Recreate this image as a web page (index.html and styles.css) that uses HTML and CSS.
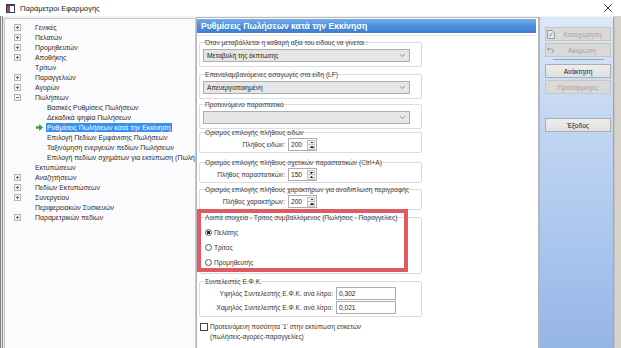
FILE: index.html
```html
<!DOCTYPE html>
<html lang="el">
<head>
  <meta charset="utf-8">
  <title>Παράμετροι Εφαρμογής</title>
  <link rel="stylesheet" href="styles.css">
</head>
<body>
  <div class="window">
    <div class="titlebar">
      <svg class="app-icon" width="9" height="9" viewBox="0 0 9 9">
        <rect x="0.5" y="0.5" width="8" height="8" fill="#fff" stroke="#2b3f73"/>
        <rect x="0" y="0" width="9" height="2" fill="#2b3f73"/>
        <rect x="1" y="2" width="3" height="6" fill="#d2343a"/>
      </svg>
      <span class="title">Παράμετροι Εφαρμογής</span>
      <svg class="close" width="8" height="8" viewBox="0 0 8 8">
        <path d="M0.5 0.5 L7.5 7.5 M7.5 0.5 L0.5 7.5" stroke="#333" stroke-width="1"/>
      </svg>
    </div>

    <div class="main">
      <div class="tree">
        <ul>
          <li class="row"><span class="twist"><span class="box plus"></span></span>Γενικές</li>
          <li class="row"><span class="twist"><span class="box plus"></span></span>Πελατών</li>
          <li class="row"><span class="twist"><span class="box plus"></span></span>Προμηθευτών</li>
          <li class="row"><span class="twist"><span class="box plus"></span></span>Αποθήκης</li>
          <li class="row"><span class="twist"></span>Τρίτων</li>
          <li class="row"><span class="twist"><span class="box plus"></span></span>Παραγγελιών</li>
          <li class="row"><span class="twist"><span class="box plus"></span></span>Αγορών</li>
          <li class="row"><span class="twist"><span class="box"></span></span>Πωλήσεων</li>
          <li class="row child"><span class="twist"></span>Βασικές Ρυθμίσεις Πωλήσεων</li>
          <li class="row child"><span class="twist"></span>Δεκαδικά ψηφία Πωλήσεων</li>
          <li class="row child">
            <span class="twist">
              <svg class="arrow" width="7" height="7" viewBox="0 0 7 7">
                <path d="M0 2.2 H3.2 V0 L7 3.5 L3.2 7 V4.8 H0 Z" fill="#3e9e38"/>
              </svg>
            </span>
            <span class="selected">Ρυθμίσεις Πωλήσεων κατά την Εκκίνηση</span>
          </li>
          <li class="row child"><span class="twist"></span>Επιλογή Πεδίων Εμφάνισης Πωλήσεων</li>
          <li class="row child"><span class="twist"></span>Ταξινόμηση ενεργειών πεδίων Πωλήσεων</li>
          <li class="row child"><span class="twist"></span>Επιλογή πεδίων σχημάτων για εκτύπωση (Πωλήσεις)</li>
          <li class="row"><span class="twist"></span>Εκτυπώσεων</li>
          <li class="row"><span class="twist"><span class="box plus"></span></span>Αναζητήσεων</li>
          <li class="row"><span class="twist"><span class="box plus"></span></span>Πεδίων Εκτυπώσεων</li>
          <li class="row"><span class="twist"><span class="box plus"></span></span>Συνεργείου</li>
          <li class="row"><span class="twist"></span>Περιφερειακών Συσκευών</li>
          <li class="row"><span class="twist"><span class="box plus"></span></span>Παραμετρικών πεδίων</li>
        </ul>
      </div>

      <div class="panel">
        <div class="panel-head">Ρυθμίσεις Πωλήσεων κατά την Εκκίνηση</div>
        <div class="head-rule"></div>

        <div class="groups">
          <div class="group g1">
            <span class="legend">Όταν μεταβάλλεται η καθαρή αξία του είδους να γίνεται :</span>
            <div class="combo"><span>Μεταβολή της έκπτωσης</span><svg width="5" height="3" viewBox="0 0 5 3"><path d="M0.3 0.3 L2.5 2.5 L4.7 0.3" fill="none" stroke="#777" stroke-width="0.8"/></svg></div>
          </div>

          <div class="group g2">
            <span class="legend">Επαναλαμβανόμενες εισαγωγές στα είδη (LF)</span>
            <div class="combo"><span>Απενεργοποιημένη</span><svg width="5" height="3" viewBox="0 0 5 3"><path d="M0.3 0.3 L2.5 2.5 L4.7 0.3" fill="none" stroke="#777" stroke-width="0.8"/></svg></div>
          </div>

          <div class="group g3">
            <span class="legend">Προτεινόμενο παραστατικό</span>
            <div class="combo"><span></span><svg width="5" height="3" viewBox="0 0 5 3"><path d="M0.3 0.3 L2.5 2.5 L4.7 0.3" fill="none" stroke="#777" stroke-width="0.8"/></svg></div>
          </div>

          <div class="group spin-group g4">
            <span class="legend">Ορισμός επιλογής πλήθους ειδών</span>
            <div class="field">
              <span class="field-label">Πλήθος ειδών:</span>
              <span class="spin"><span>200</span><span class="spin-btn"></span></span>
            </div>
          </div>

          <div class="group spin-group g5">
            <span class="legend">Ορισμός επιλογής πλήθους σχετικών παραστατικών (Ctrl+A)</span>
            <div class="field">
              <span class="field-label">Πλήθος παραστατικών:</span>
              <span class="spin"><span>150</span><span class="spin-btn"></span></span>
            </div>
          </div>

          <div class="group spin-group g6">
            <span class="legend">Ορισμός επιλογής πλήθους χαρακτήρων για αναδίπλωση περιγραφής</span>
            <div class="field">
              <span class="field-label">Πλήθος χαρακτήρων:</span>
              <span class="spin"><span>200</span><span class="spin-btn"></span></span>
            </div>
          </div>

          <div class="group g7">
            <span class="legend">Λοιπά στοιχεία - Τρίτος συμβαλλόμενος (Πωλήσεις - Παραγγελίες)</span>
            <label class="radio"><span class="dot checked"></span><span>Πελάτης</span></label>
            <label class="radio"><span class="dot"></span><span>Τρίτος</span></label>
            <label class="radio"><span class="dot"></span><span>Προμηθευτής</span></label>
            <div class="annotation"></div>
          </div>

          <div class="group g8">
            <span class="legend">Συντελεστές Ε.Φ.Κ.</span>
            <div class="field">
              <span class="field-label wide">Υψηλός Συντελεστής Ε.Φ.Κ. ανά λίτρο:</span>
              <span class="textbox">0,302</span>
            </div>
            <div class="field">
              <span class="field-label wide">Χαμηλός Συντελεστής Ε.Φ.Κ. ανά λίτρο:</span>
              <span class="textbox">0,021</span>
            </div>
          </div>

          <label class="check">
            <span class="check-box"></span>
            <span>Προτεινόμενη ποσότητα '1' στην εκτύπωση ετικετών<br>(πωλήσεις-αγορές-παραγγελίες)</span>
          </label>
        </div>
      </div>

      <div class="sidebar">
        <div class="btn disabled">
          <svg class="btn-icon" width="8" height="9" viewBox="0 0 8 9">
            <path d="M0.5 0.5 H5 L7.5 3 V8.5 H0.5 Z" fill="#e9e9e9" stroke="#9a9a9a"/>
            <path d="M2 5.5 L5 2.5 L6 3.5 L3 6.5 H2 Z" fill="#a8a8a8"/>
          </svg>
          <span>Καταχώρηση</span>
        </div>
        <div class="btn disabled">
          <svg class="btn-icon" width="7" height="6" viewBox="0 0 7 6">
            <path d="M1.5 2 H4.5 A2 2 0 0 1 4.5 6" fill="none" stroke="#9a9a9a" stroke-width="1"/>
            <path d="M0 2 L2 0 V4 Z" fill="#9a9a9a"/>
          </svg>
          <span>Ακύρωση</span>
        </div>
        <div class="separator"></div>
        <div class="btn">Ανάκτηση</div>
        <div class="btn disabled">Προσαρμογές</div>
        <div class="btn exit">Έξοδος</div>
      </div>

      <div class="edge"></div>
    </div>
  </div>
</body>
</html>
```

FILE: styles.css
```css
*, :after, :before {
  box-sizing: border-box;
}

html, body {
  height: 100%;
  margin: 0;
  padding: 0;
}

body {
  font-family: "Liberation Sans", Arial, sans-serif;
  color: #1e1e1e;
  background-color: #f2f2f2;
  overflow: hidden;
}

.window {
  width: 621px;
  height: 348px;
  display: flex;
  flex-direction: column;
  background: linear-gradient(to right, #808080 0 1px, #e6e6e6 1px 2px, #8c8c8c 2px 3px, #e9e9e9 3px 4px, #f2f2f2 4px);
}

/* title bar */

.titlebar {
  height: 16px;
  flex: none;
  display: flex;
  align-items: center;
  background-color: #fff;
}

.app-icon {
  margin-left: 6px;
}

.title {
  margin-left: 5px;
  font-size: 7.5px;
  color: #222;
}

.close {
  margin-left: auto;
  margin-right: 9px;
}

.main {
  flex: 1;
  display: flex;
  min-height: 0;
}

/* tree */

.tree {
  width: 192px;
  flex: none;
  margin-left: 4px;
  margin-top: 2px;
  padding-top: 3px;
  background-color: #fbfbfd;
  border: 1px solid #c9c9c9;
  border-bottom: 0;
  overflow: hidden;
}

.tree ul {
  list-style: none;
  margin: 0;
  padding: 0;
}

.row {
  display: flex;
  align-items: center;
  height: 10px;
  font-size: 6.9px;
  color: #2a2a2a;
  white-space: nowrap;
}

.twist {
  width: 30px;
  flex: none;
  display: flex;
  align-items: center;
}

.row.child .twist {
  width: 42px;
}

.box {
  margin-left: 9px;
  width: 7px;
  height: 7px;
  border: 1px solid #b4b4b4;
  background:
    linear-gradient(#6a6a6a, #6a6a6a) center / 3px 1px no-repeat,
    #f3f3f3;
}

.box.plus {
  background:
    linear-gradient(#6a6a6a, #6a6a6a) center / 3px 1px no-repeat,
    linear-gradient(#6a6a6a, #6a6a6a) center / 1px 3px no-repeat,
    #f3f3f3;
}

.arrow {
  margin-left: 31px;
}

.selected {
  margin-left: -1px;
  padding: 0 1px;
  height: 9px;
  line-height: 9px;
  background-color: #3392f2;
  color: #fff;
}

/* settings panel */

.panel {
  width: 343px;
  flex: none;
  margin-top: 1px;
  background-color: #fff;
  border: 1px solid #b5b5b5;
  border-bottom: 0;
}

.panel-head {
  height: 14px;
  margin: 1px 2px 0 0;
  padding-left: 4px;
  line-height: 14px;
  font-size: 8.6px;
  font-weight: bold;
  color: #fff;
  background: linear-gradient(#74abea, #4a8ddb 55%, #3d80d2);
}

.head-rule {
  height: 1px;
  margin-top: 2px;
  margin-right: 2px;
  background-color: #f8e4d6;
}

.groups {
  padding-left: 2px;
  font-size: 6.6px;
}

.group {
  position: relative;
  width: 223px;
  border: 1px solid #dcdcdc;
  border-radius: 2px;
  padding: 0 3px 4px;
}

.legend {
  display: block;
  height: 8px;
  line-height: 8px;
  margin-top: -4px;
  margin-left: 2px;
  color: #3a3a3a;
  white-space: nowrap;
}

.g1 { margin-top: 6px; }
.g2 { margin-top: 7px; }
.g3 { margin-top: 5px; }
.g4 { margin-top: 3px; }
.g5 { margin-top: 9px; }
.g6 { margin-top: 6px; }
.g7 { margin-top: 7px; padding-bottom: 3px; }
.g8 { margin-top: 7px; padding-bottom: 2px; }

.combo {
  height: 13px;
  margin-top: 2px;
  width: 207px;
  display: flex;
  align-items: center;
  justify-content: space-between;
  padding: 0 4px 0 3px;
  border: 1px solid #adadad;
  background-color: #e6e6e6;
  color: #222;
}

.spin-group {
  padding-bottom: 1px;
}

.field {
  display: flex;
  align-items: center;
  height: 13px;
  margin-top: 1px;
}

.field-label {
  width: 82px;
  text-align: right;
  margin-right: 3px;
  color: #333;
  white-space: nowrap;
}

.field-label.wide {
  width: 130px;
}

.spin {
  width: 29px;
  height: 13px;
  display: flex;
  align-items: center;
  justify-content: space-between;
  padding: 0 1px 0 2px;
  border: 1px solid #abadb3;
  background-color: #fff;
}

.spin-btn {
  width: 8px;
  height: 10px;
  border: 1px solid #c4c4c4;
  background:
    linear-gradient(to top right, transparent 50%, #333 50%) 1.5px 1px / 2px 2px no-repeat,
    linear-gradient(to top left, transparent 50%, #333 50%) 3.5px 1px / 2px 2px no-repeat,
    linear-gradient(to bottom right, transparent 50%, #333 50%) 1.5px 5px / 2px 2px no-repeat,
    linear-gradient(to bottom left, transparent 50%, #333 50%) 3.5px 5px / 2px 2px no-repeat,
    linear-gradient(#c4c4c4, #c4c4c4) 0 3.5px / 100% 1px no-repeat,
    #efefef;
}

.textbox {
  width: 60px;
  height: 13px;
  line-height: 11px;
  padding-left: 2px;
  border: 1px solid #abadb3;
  background-color: #fff;
}

.radio {
  display: flex;
  align-items: center;
  height: 15px;
  color: #333;
}

.g7 .radio:first-of-type {
  margin-top: 3px;
}

.dot {
  width: 7px;
  height: 7px;
  flex: none;
  margin: 0 2px 0 2px;
  border: 1px solid #555;
  border-radius: 50%;
  background-color: #fff;
}

.dot.checked {
  background: radial-gradient(circle, #222 0 1.6px, #fff 2px);
}

.annotation {
  position: absolute;
  left: -3px;
  top: -9px;
  width: 211px;
  height: 63px;
  border: 4px solid #e05a62;
  pointer-events: none;
}

.g8 .field + .field {
  margin-top: 1px;
}

.check {
  display: flex;
  align-items: flex-start;
  margin-top: 5px;
  line-height: 10px;
  color: #333;
}

.check-box {
  width: 8px;
  height: 8px;
  flex: none;
  margin: 1px 2px 0 1px;
  border: 1px solid #444;
  background-color: #fff;
}

/* buttons column */

.sidebar {
  width: 75px;
  flex: none;
  margin-top: 1px;
  padding: 10px 0 0 5px;
  border-left: 1px solid #a6bbd8;
  border-right: 1px solid #8fa9cf;
  background: linear-gradient(#dde8f7, #c3d7f2 30%, #a9c5ee 70%, #95b5e6);
}

.btn {
  width: 66px;
  height: 14px;
  margin-bottom: 2px;
  display: flex;
  align-items: center;
  justify-content: center;
  font-size: 6.6px;
  color: #222;
  background: linear-gradient(#ededed, #e0e0e0);
  border: 1px solid #adadad;
}

.btn.disabled {
  color: #a3a3a3;
  background: #d9d9d9;
  border-color: #c6c6c6;
}

.btn-icon {
  margin-right: auto;
  margin-left: 1px;
}

.btn-icon + span {
  margin-right: auto;
}

.separator {
  height: 1px;
  margin: 1px 9px 4px 8px;
  background-color: #8ea6c9;
}

.btn + .btn {
  margin-top: 1px;
}

.btn.exit {
  margin-top: 24px;
}

.edge {
  width: 7px;
  flex: none;
  background: linear-gradient(to right, #c6c2ba 0 1px, #d8d4cc 1px);
}
```
